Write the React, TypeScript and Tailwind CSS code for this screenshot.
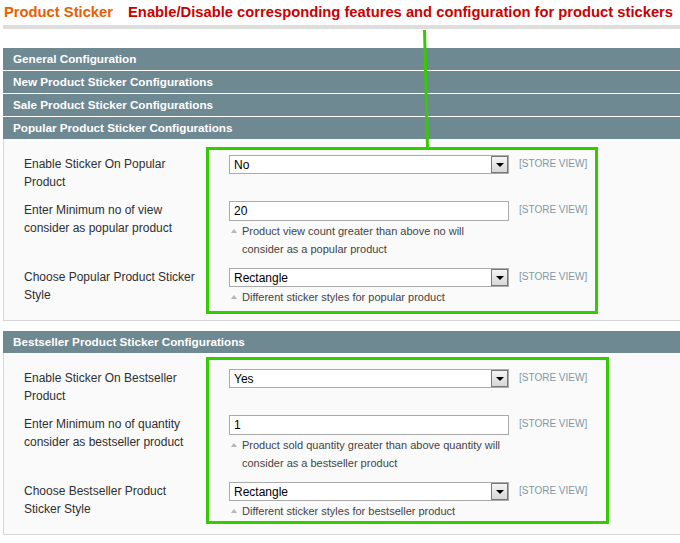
import React from 'react'

type Row =
  | { kind: 'select'; label: string[]; value: string; hint?: string[] }
  | { kind: 'input'; label: string[]; value: string; hint?: string[] }

const popularRows: Row[] = [
  { kind: 'select', label: ['Enable Sticker On Popular', 'Product'], value: 'No' },
  {
    kind: 'input',
    label: ['Enter Minimum no of view', 'consider as popular product'],
    value: '20',
    hint: ['Product view count greater than above no will', 'consider as a popular product'],
  },
  {
    kind: 'select',
    label: ['Choose Popular Product Sticker', 'Style'],
    value: 'Rectangle',
    hint: ['Different sticker styles for popular product'],
  },
]

const bestsellerRows: Row[] = [
  { kind: 'select', label: ['Enable Sticker On Bestseller', 'Product'], value: 'Yes' },
  {
    kind: 'input',
    label: ['Enter Minimum no of quantity', 'consider as bestseller product'],
    value: '1',
    hint: ['Product sold quantity greater than above quantity will', 'consider as a bestseller product'],
  },
  {
    kind: 'select',
    label: ['Choose Bestseller Product', 'Sticker Style'],
    value: 'Rectangle',
    hint: ['Different sticker styles for bestseller product'],
  },
]

function SectionHeader({ title }: { title: string }) {
  return (
    <div className="h-[22px] bg-[#6f8992] pl-[10px] flex items-center text-white font-bold text-[11.7px]">
      {title}
    </div>
  )
}

function FakeSelect({ value }: { value: string }) {
  return (
    <div className="h-[19px] border border-[#aaa] bg-white flex items-center justify-between pl-[4px]">
      <span className="text-[12px] text-black leading-none">{value}</span>
      <span className="w-[17px] h-[17px] border border-[#777] bg-gradient-to-b from-[#f4f4f4] to-[#d8d8d8] flex items-center justify-center">
        <span className="w-0 h-0 border-l-[4px] border-r-[4px] border-t-[4px] border-l-transparent border-r-transparent border-t-black" />
      </span>
    </div>
  )
}

function FakeInput({ value }: { value: string }) {
  return (
    <div className="h-[20px] border border-[#aaa] bg-white flex items-center pl-[4px]">
      <span className="text-[12px] text-black leading-none">{value}</span>
    </div>
  )
}

function Hint({ lines }: { lines: string[] }) {
  return (
    <div className="flex mt-px text-[11px] leading-[18px] text-[#444]">
      <span className="w-[13px] shrink-0 pl-[2px] pt-[7px]">
        <span className="block w-0 h-0 border-l-[3px] border-r-[3px] border-b-[4px] border-l-transparent border-r-transparent border-b-[#b5b5b5]" />
      </span>
      <div>
        {lines.map((l) => (
          <div key={l}>{l}</div>
        ))}
      </div>
    </div>
  )
}

function ConfigPanel({ rows, box }: { rows: Row[]; box: string }) {
  return (
    <div className="relative bg-[#fafafa] border-l border-b border-[#d6d6d6] pt-[16px] pb-[14px] pl-[20px]">
      <div className="flex flex-col gap-[10px]">
        {rows.map((r) => (
          <div key={r.label.join(' ')} className="flex">
            <div className="w-[205px] shrink-0 text-[12px] leading-[18px] text-[#2f2f2f]">
              {r.label.map((l) => (
                <div key={l}>{l}</div>
              ))}
            </div>
            <div className="w-[280px] shrink-0">
              {r.kind === 'select' ? <FakeSelect value={r.value} /> : <FakeInput value={r.value} />}
              {r.hint && <Hint lines={r.hint} />}
            </div>
            <div className="ml-[10px] text-[10px] leading-[18px] text-[#7f98a3]">[STORE VIEW]</div>
          </div>
        ))}
      </div>
      {/* green annotation box */}
      <div className={`absolute border-[3px] border-[#33cc00] pointer-events-none ${box}`} />
    </div>
  )
}

export default function App() {
  return (
    <div className="relative w-[680px] h-[543px] overflow-hidden bg-white font-['Liberation_Sans',Arial,sans-serif]">
      <div className="h-[25px] flex items-center gap-[15px] pl-[4px]">
        <span className="text-[14.75px] font-bold text-[#eb5e00]">Product Sticker</span>
        <span className="text-[14.75px] font-bold text-[#cc0000]">
          Enable/Disable corresponding features and configuration for product stickers
        </span>
      </div>

      <div className="ml-[3px]">
        <div className="h-[4px] bg-[#dddddd]" />
        <div className="h-[19px]" />
        <div className="flex flex-col gap-px">
          <SectionHeader title="General Configuration" />
          <SectionHeader title="New Product Sticker Configurations" />
          <SectionHeader title="Sale Product Sticker Configurations" />
          <SectionHeader title="Popular Product Sticker Configurations" />
        </div>
        <ConfigPanel rows={popularRows} box="left-[202px] top-[8px] w-[392px] h-[167px]" />

        <div className="mt-[10px]">
          <SectionHeader title="Bestseller Product Sticker Configurations" />
        </div>
        <ConfigPanel rows={bestsellerRows} box="left-[202px] top-[4px] w-[403px] h-[167px]" />
      </div>

      {/* pointer line */}
      <svg className="absolute left-0 top-0 pointer-events-none" width="680" height="543">
        <line x1="424.5" y1="30" x2="427.5" y2="148" stroke="#33cc00" strokeWidth="3" />
      </svg>
    </div>
  )
}
